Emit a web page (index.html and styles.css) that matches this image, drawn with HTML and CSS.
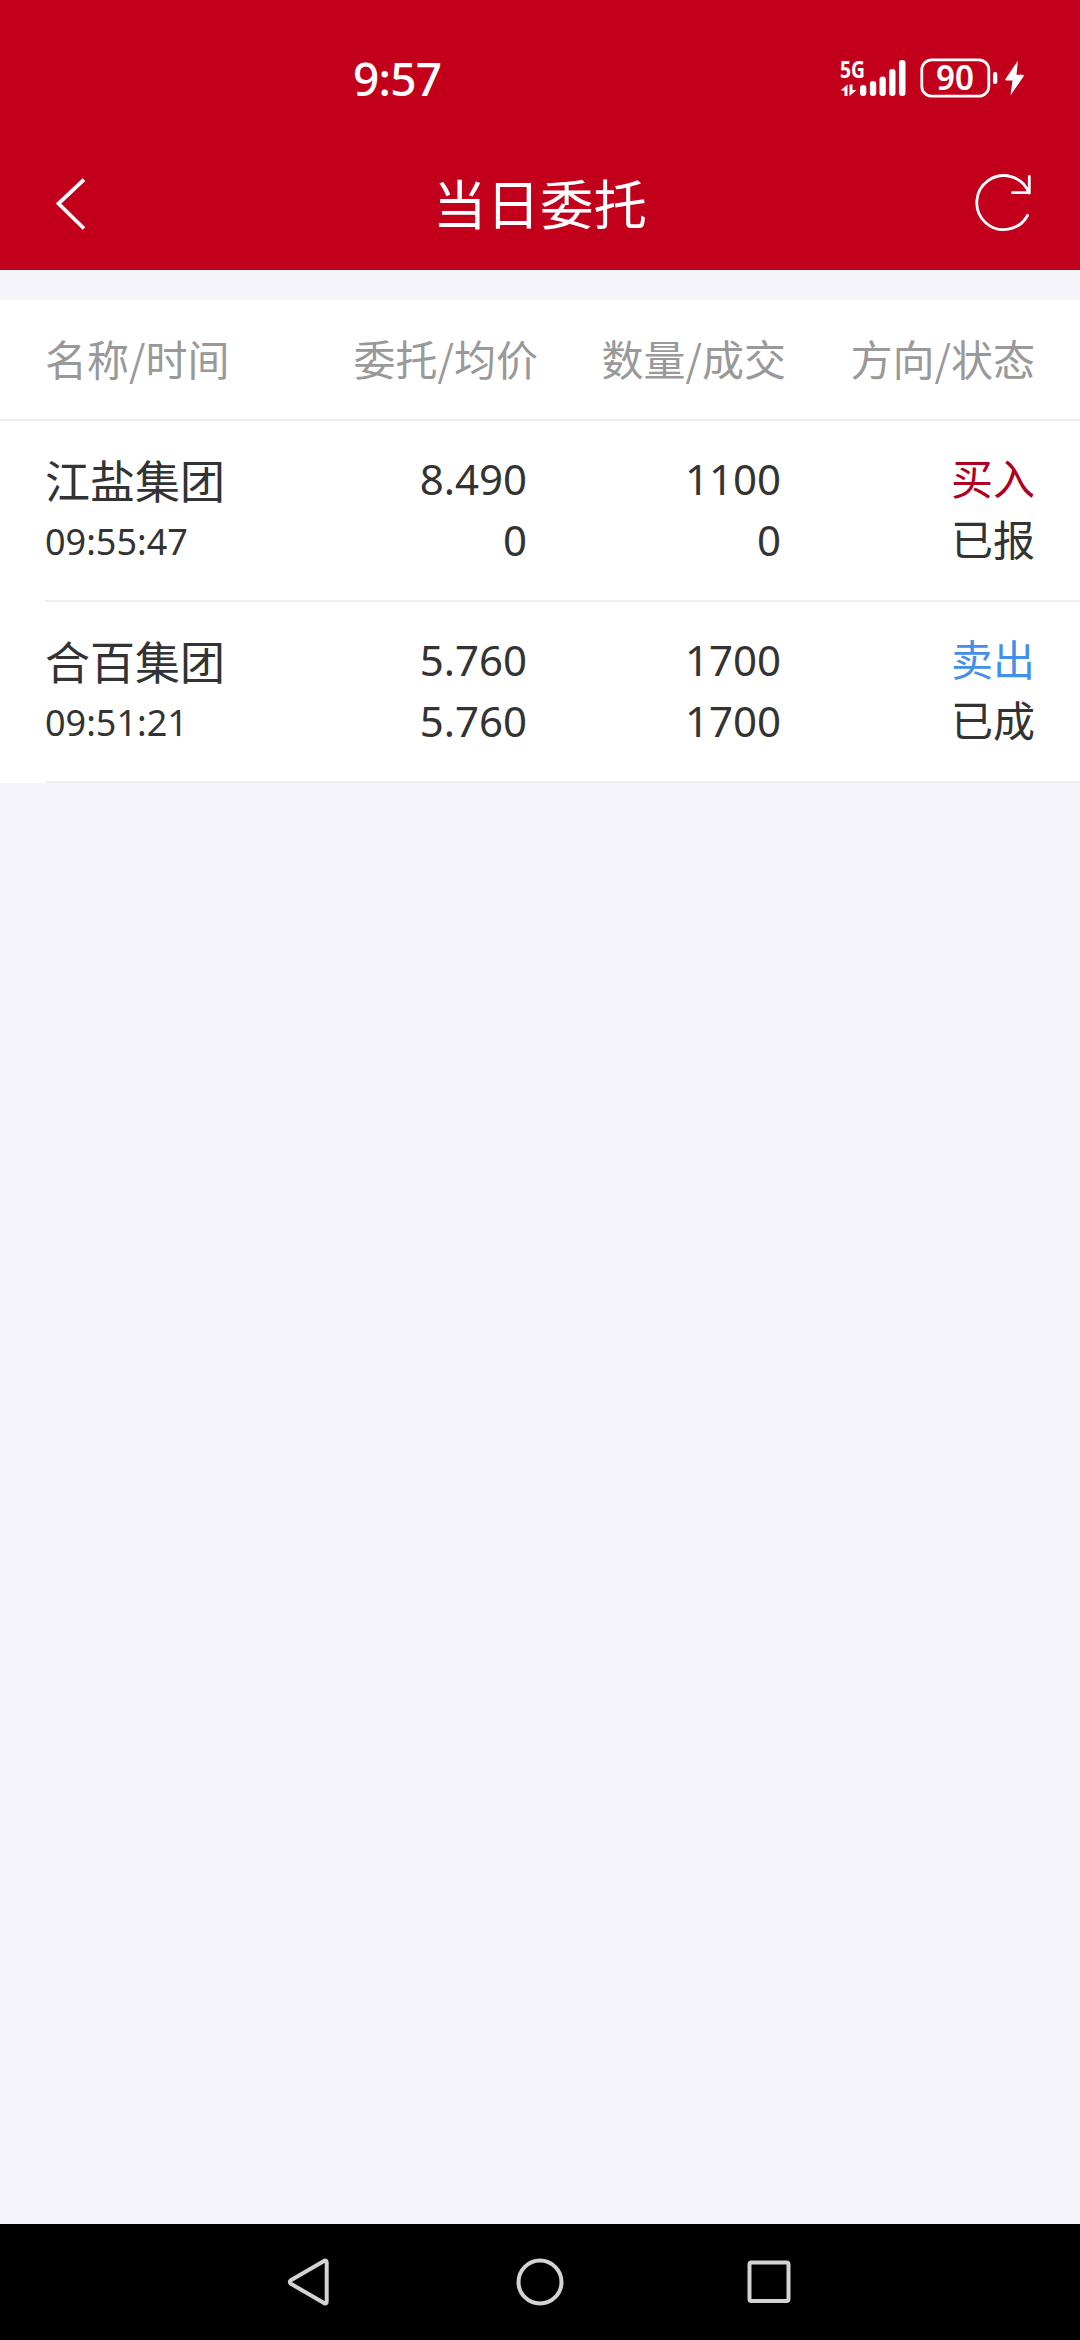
FILE: index.html
```html
<!DOCTYPE html>
<html lang="zh-CN">
<head>
<meta charset="utf-8">
<title>当日委托</title>
<link rel="stylesheet" href="styles.css">
</head>
<body>
<div class="screen">
  <header class="top">
    <div class="status">
      <span class="clock">9:57</span>
      <svg class="indicators" width="190" height="68" viewBox="838 44 190 68" fill="#fff">
        <text class="net" x="840" y="77.600" textLength="25" lengthAdjust="spacingAndGlyphs">5G</text>
        <path d="M847.500 84.500v11.500h-3V90.500h-4zM849.500 84.500h3v5.500h4L849.500 96z"/>
        <rect x="860" y="85" width="6.300" height="11" rx="3"/>
        <rect x="869.900" y="81" width="6.300" height="15" rx="3"/>
        <rect x="879.500" y="76.500" width="6.300" height="19.500" rx="3"/>
        <rect x="889.200" y="69" width="6.300" height="27" rx="3"/>
        <rect x="899" y="60" width="6.500" height="36" rx="3"/>
        <rect x="921.800" y="59.800" width="67" height="36.400" rx="10" fill="none" stroke="#fff" stroke-width="2.800"/>
        <text class="level" x="936" y="90.300" textLength="38" lengthAdjust="spacingAndGlyphs">90</text>
        <rect x="993" y="72" width="4.300" height="12" rx="2"/>
        <path d="M1018 60.500 1005.500 79q-1 1.500 1 1.500h6L1010.500 95.500 1023.500 76.500q1-1.800-1-1.800h-6z"/>
      </svg>
    </div>
    <div class="titlebar">
      <svg width="60" height="60" viewBox="42 173 60 60" fill="none" stroke="#fff" stroke-width="3.800"><path d="M84 179.700 58.500 203.500 84 228.500"/></svg>
      <h1 class="title">当日委托</h1>
      <svg width="60" height="60" viewBox="973 173 60 60" fill="none" stroke="#fff" stroke-width="2.800" stroke-linecap="round"><path d="M1027.500 215.500A27 27 0 1 1 1029 193M1029.300 176.500V192.700H1012.500"/></svg>
    </div>
  </header>
  <main class="orders">
    <div class="row head">
      <span>名称/时间</span><span>委托/均价</span><span>数量/成交</span><span>方向/状态</span>
    </div>
    <div class="item">
      <div class="row order">
        <div class="stock"><div class="name">江盐集团</div><div class="time">09:55:47</div></div>
        <div class="num"><div>8.490</div><div>0</div></div>
        <div class="num"><div>1100</div><div>0</div></div>
        <div class="state"><div class="buy">买入</div><div>已报</div></div>
      </div>
    </div>
    <div class="item">
      <div class="row order">
        <div class="stock"><div class="name">合百集团</div><div class="time">09:51:21</div></div>
        <div class="num"><div>5.760</div><div>5.760</div></div>
        <div class="num"><div>1700</div><div>1700</div></div>
        <div class="state"><div class="sell">卖出</div><div>已成</div></div>
      </div>
    </div>
  </main>
  <nav class="nav">
    <svg width="48" height="52" viewBox="286 2256 48 52"><path d="M290.800 2280.300 324 2260.900Q326.700 2259.500 326.700 2262.500V2301.500Q326.700 2304.500 324 2303.100L290.800 2283.700Q288.800 2282 290.800 2280.300Z"/></svg>
    <svg width="48" height="52" viewBox="516 2256 48 52"><circle cx="540" cy="2282" r="21.500"/></svg>
    <svg width="48" height="52" viewBox="746 2256 48 52"><rect x="749.500" y="2262.500" width="39" height="38.500" rx="2"/></svg>
  </nav>
</div>
</body>
</html>
```
FILE: styles.css
```css
body {
  margin: 0;
}

.screen {
  display: flex;
  flex-direction: column;
  width: 1080px;
  height: 2340px;
  background: #f4f4fa;
  color: #333;
  font-family: "Noto Sans", "Noto Sans CJK SC", sans-serif;
}

.top {
  box-sizing: border-box;
  height: 270px;
  margin-bottom: 30px;
  padding-top: 40px;
  background: #c3001b;
  color: #fff;
}

.status {
  display: flex;
  align-items: center;
  justify-content: space-between;
  height: 76px;
  padding: 0 52px 0 353px;
}

.clock {
  font-size: 46px;
  font-weight: 500;
  line-height: 76px;
  letter-spacing: -0.8px;
}

.net {
  font-size: 24px;
  font-weight: 700;
}

.level {
  font-size: 34px;
  font-weight: 600;
}

.titlebar {
  display: flex;
  align-items: center;
  justify-content: space-between;
  height: 60px;
  margin-top: 57px;
  padding: 0 47px 0 42px;
}

.title {
  margin: 0;
  padding: 0 0 2px 5px;
  font: 400 53.500px/58px "Noto Sans CJK SC", sans-serif;
}

.orders {
  background: #fff;
}

.row {
  display: grid;
  grid-template-columns: 1fr 247px 248px 249px;
  padding: 0 45px;
}

.row > :not(:first-child) {
  text-align: right;
}

.head {
  height: 119px;
  border-bottom: 2px solid #eee;
  color: #999;
  font: 42px/116px "Noto Sans CJK SC", sans-serif;
}

.item {
  background: linear-gradient(#eee, #eee) right bottom / 1035px 2px no-repeat;
}

.order {
  height: 154px;
  padding-top: 27px;
  font-size: 42px;
  line-height: 61px;
}

.name {
  padding-top: 2px;
  font-size: 45px;
  line-height: 64px;
}

.time {
  font-size: 36px;
  line-height: 56px;
}

.num {
  padding-right: 11px;
}

.num + .num {
  padding-right: 5px;
}

.buy {
  color: #b00020;
}

.sell {
  color: #4490e8;
}

.nav {
  display: flex;
  align-items: center;
  justify-content: center;
  gap: 182px;
  height: 116px;
  margin-top: auto;
  background: #000;
}

.nav svg {
  fill: none;
  stroke: #d3d3d3;
  stroke-width: 4;
}
```
